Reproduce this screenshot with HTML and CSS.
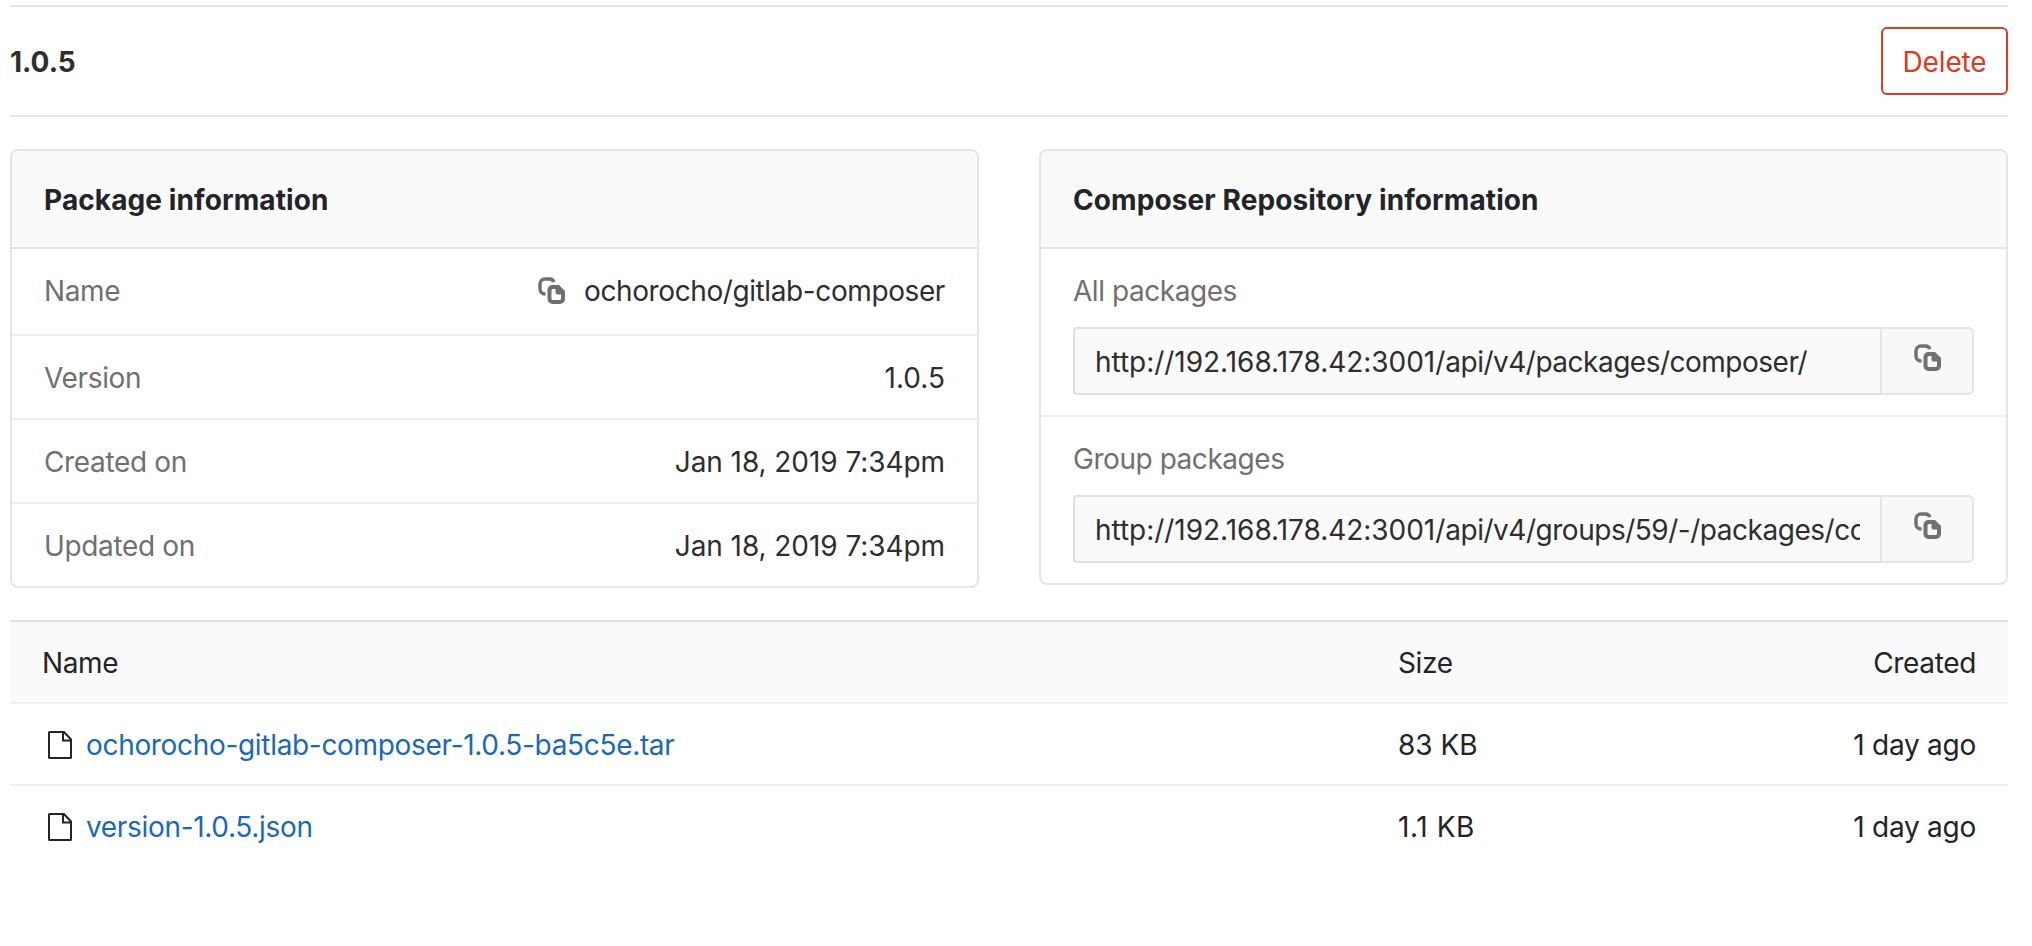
FILE: index.html
```html
<!DOCTYPE html>
<html lang="en">
<head>
<meta charset="utf-8">
<title>Package 1.0.5</title>
<link rel="stylesheet" href="styles.css">
</head>
<body>
<svg class="sprite" aria-hidden="true">
  <symbol id="copy" viewBox="0 0 27 27">
    <path d="M7.500 17H7a5 5 0 0 1-5-5V7a5 5 0 0 1 5-5h4.500q3.500 0 4.200 3.200" fill="none" stroke="currentColor" stroke-width="3.500"/>
    <path fill-rule="evenodd" d="M14.500 8H21l6 6v8a5 5 0 0 1-5 5h-7.500a5 5 0 0 1-5-5v-9a5 5 0 0 1 5-5zM15 12q-1.500 0-1.500 1.500v8q0 1.500 1.500 1.500h6.500q1.500 0 1.500-1.500V17.500h-3.500q-2 0-2-2V12z" fill="currentColor"/>
  </symbol>
  <symbol id="file" viewBox="0 0 24 28">
    <path d="M1 1.500v25q0 .5.500.5h21q.5 0 .5-.5V8.500L16 1H1.500Q1 1 1 1.500zM15 1v8.500h8" fill="none" stroke="currentColor" stroke-width="2"/>
  </symbol>
</svg>
<main class="page">
  <header class="topbar">
    <strong class="version">1.0.5</strong>
    <button class="delete">Delete</button>
  </header>
  <div class="cards">
    <section class="card">
      <h2 class="card-title">Package information</h2>
      <div class="row row-name"><span class="label">Name</span><span class="value"><svg class="copy"><use href="#copy"/></svg><span class="package">ochorocho/gitlab-composer</span></span></div>
      <div class="row"><span class="label">Version</span><span>1.0.5</span></div>
      <div class="row"><span class="label">Created on</span><span class="date">Jan 18, 2019 7:34pm</span></div>
      <div class="row"><span class="label">Updated on</span><span class="date">Jan 18, 2019 7:34pm</span></div>
    </section>
    <section class="card">
      <h2 class="card-title">Composer Repository information</h2>
      <div class="repo">
        <span class="label">All packages</span>
        <div class="field"><div class="url"><div class="clip">http://192.168.178.42:3001/<span class="path">api/v4/packages/composer/</span></div></div><button class="copy-btn" aria-label="Copy"><svg class="copy"><use href="#copy"/></svg></button></div>
      </div>
      <div class="repo">
        <span class="label">Group packages</span>
        <div class="field"><div class="url"><div class="clip">http://192.168.178.42:3001/<span class="path group">api/v4/groups/59/-/packages/composer/</span></div></div><button class="copy-btn" aria-label="Copy"><svg class="copy"><use href="#copy"/></svg></button></div>
      </div>
    </section>
  </div>
  <div class="files">
    <div class="file-row head"><span>Name</span><span>Size</span><span class="end">Created</span></div>
    <div class="file-row"><span class="file"><svg class="doc"><use href="#file"/></svg><a>ochorocho-gitlab-composer-1.0.5-ba5c5e.tar</a></span><span class="size">83 KB</span><span class="end">1 day ago</span></div>
    <div class="file-row"><span class="file"><svg class="doc"><use href="#file"/></svg><a>version-1.0.5.json</a></span><span class="size wide">1.1 KB</span><span class="end">1 day ago</span></div>
  </div>
</main>
</body>
</html>
```
FILE: styles.css
```css
* { box-sizing: border-box; }
body {
  margin: 0;
  background: #fff;
  color: #2e2e2e;
  font: 28px/40px Inter, "Noto Sans", sans-serif;
}
.sprite { display: none; }
.page { width: 1998px; margin: 5px 0 0 10px; }
.topbar {
  display: flex;
  align-items: center;
  justify-content: space-between;
  height: 112px;
  border: solid #e5e5e5;
  border-width: 2px 0;
}
.version { padding-top: 2px; font-weight: 700; }
.delete {
  width: 127px;
  height: 68px;
  padding: 2px 0 0;
  border: 2px solid #db3b21;
  border-radius: 6px;
  background: #fff;
  color: #db3b21;
  font: inherit;
  letter-spacing: -0.15px;
}
.cards {
  display: grid;
  grid-template-columns: 969px 969px;
  justify-content: space-between;
  align-items: start;
  margin-top: 32px;
}
.card { border: 2px solid #e5e5e5; border-radius: 8px; overflow: hidden; }
.card-title {
  height: 98px;
  margin: 0;
  padding: 29px 32px 27px;
  border-bottom: 2px solid #e5e5e5;
  background: #fafafa;
  color: #212529;
  font-size: 28px;
  font-weight: 700;
  letter-spacing: 0.1px;
}
.row {
  display: flex;
  align-items: center;
  justify-content: space-between;
  height: 84px;
  padding: 2px 32px 0;
  border-bottom: 2px solid #f0f0f0;
}
.row-name { height: 87px; padding: 0 32px 1px; }
.row:last-child { height: 82px; border-bottom: 0; }
.label { color: #707070; letter-spacing: -0.35px; }
.value { display: flex; align-items: center; gap: 19px; }
.package { letter-spacing: -0.4px; }
.date { letter-spacing: -0.07px; }
.copy { display: block; width: 27px; height: 27px; color: #707070; }
.value .copy { margin-bottom: 2px; }
.repo { height: 168px; padding: 22px 32px 20px; border-bottom: 2px solid #f0f0f0; }
.repo .label { display: block; height: 56px; letter-spacing: -0.45px; }
.repo:last-child { height: 166px; border-bottom: 0; }
.field { display: flex; height: 68px; }
.url {
  width: 809px;
  padding: 13px 20px 11px;
  border: 2px solid #dfdfdf;
  border-right-color: #e5e5e5;
  border-radius: 4px 0 0 4px;
  background: #fafafa;
  letter-spacing: -0.03px;
}
.path { letter-spacing: -0.5px; }
.path.group { letter-spacing: -0.48px; }
.clip { overflow: hidden; white-space: nowrap; }
.copy-btn {
  display: flex;
  justify-content: center;
  width: 92px;
  padding: 15px 0 0;
  border: 2px solid #e5e5e5;
  border-left: 0;
  border-radius: 0 6px 6px 0;
  background: #f7f8fa;
}
.files { margin-top: 32px; border-top: 2px solid #dee2e6; color: #212529; }
.file-row {
  display: grid;
  grid-template-columns: 1356px 1fr 1fr;
  align-items: center;
  height: 82px;
  padding: 2px 32px 0;
  border-bottom: 2px solid #f0f0f0;
  letter-spacing: -0.25px;
}
.file-row:last-child { border-bottom-color: transparent; }
.head { background: #fafafa; letter-spacing: -0.35px; }
.end { text-align: right; }
.size { letter-spacing: 0; }
.size.wide { letter-spacing: 0.6px; }
.file { display: flex; align-items: center; gap: 14px; padding-left: 6px; }
.doc { width: 24px; height: 28px; margin-bottom: 1px; }
.file a { color: #1b69b6; letter-spacing: -0.32px; }
```
